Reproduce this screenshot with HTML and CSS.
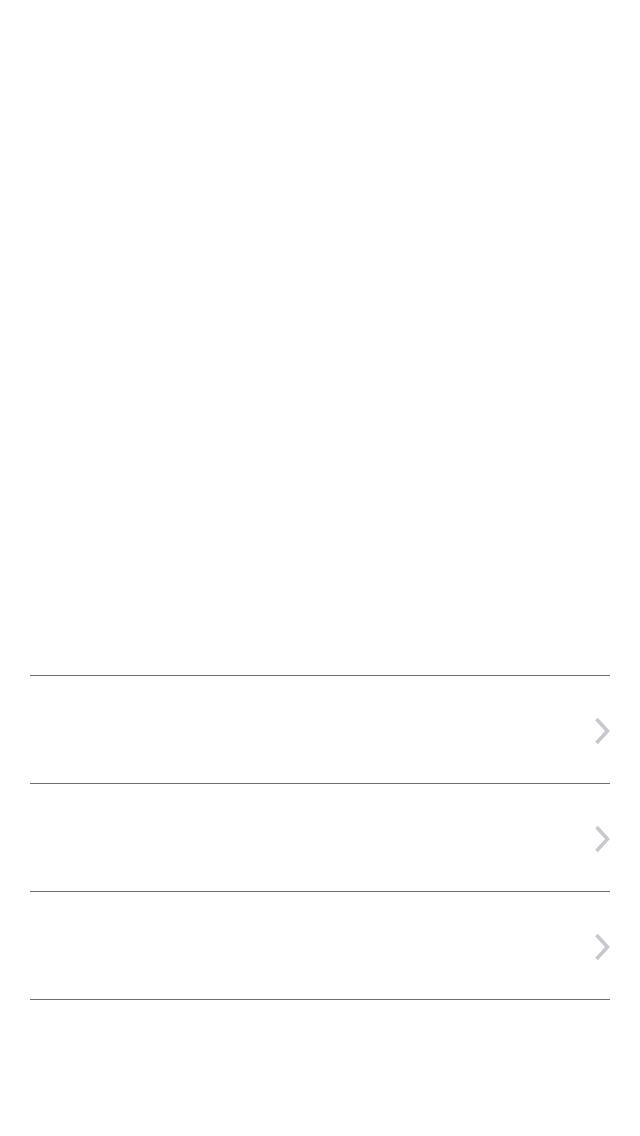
FILE: index.html
```html
<!DOCTYPE html>
<html>
<head>
<meta charset="utf-8">
<link rel="stylesheet" href="styles.css">
</head>
<body>
<main class="page">
  <div class="spacer"></div>
  <ul class="list">
    <li class="row">
      <svg class="chev" viewBox="0 0 16 28" width="16" height="28"><polyline points="2.5,2 13.5,14 2.5,26"/></svg>
    </li>
    <li class="row">
      <svg class="chev" viewBox="0 0 16 28" width="16" height="28"><polyline points="2.5,2 13.5,14 2.5,26"/></svg>
    </li>
    <li class="row">
      <svg class="chev" viewBox="0 0 16 28" width="16" height="28"><polyline points="2.5,2 13.5,14 2.5,26"/></svg>
    </li>
  </ul>
</main>
</body>
</html>
```
FILE: styles.css
```css
html, body {
  margin: 0;
  padding: 0;
  background: #ffffff;
  font-family: "Liberation Sans", Arial, sans-serif;
}
.page {
  width: 640px;
  height: 1136px;
  display: flex;
  flex-direction: column;
}
.spacer {
  height: 675px;
  flex: none;
}
.list {
  list-style: none;
  margin: 0 30px;
  padding: 0;
  border-top: 1px solid #6e6e6e;
}
.row {
  height: 107px;
  border-bottom: 1px solid #6e6e6e;
  display: flex;
  align-items: center;
  justify-content: flex-end;
}
.chev {
  display: block;
  margin-top: 2px;
}
.chev polyline {
  fill: none;
  stroke: #c7c7cc;
  stroke-width: 3.5;
  stroke-linecap: butt;
  stroke-linejoin: miter;
}
```
